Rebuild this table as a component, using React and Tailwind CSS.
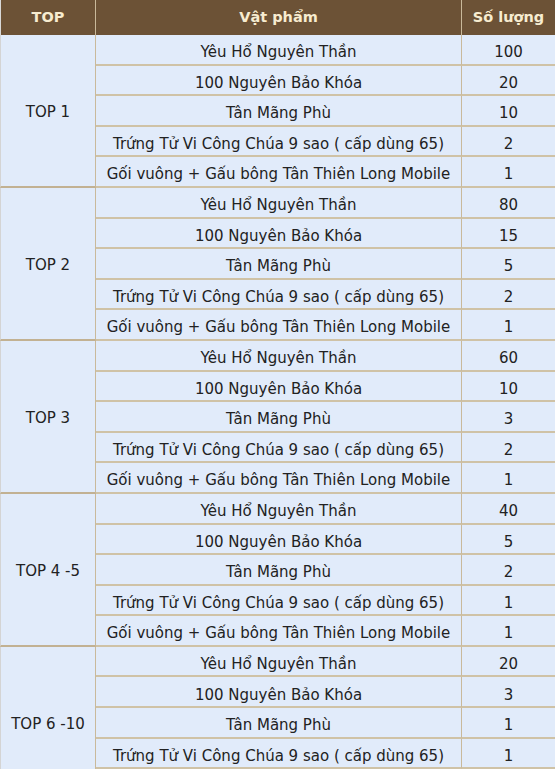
import React from "react";

const groups = [
  { top: "TOP 1", qty: [100, 20, 10, 2, 1] },
  { top: "TOP 2", qty: [80, 15, 5, 2, 1] },
  { top: "TOP 3", qty: [60, 10, 3, 2, 1] },
  { top: "TOP 4 -5", qty: [40, 5, 2, 1, 1] },
  { top: "TOP 6 -10", qty: [20, 3, 1, 1, 1] },
];

const items = [
  "Yêu Hổ Nguyên Thần",
  "100 Nguyên Bảo Khóa",
  "Tân Mãng Phù",
  "Trứng Tử Vi Công Chúa 9 sao ( cấp dùng 65)",
  "Gối vuông + Gấu bông Tân Thiên Long Mobile",
];

export default function App() {
  return (
    <div
      className="w-[555px] h-[769px] overflow-hidden bg-white"
      style={{ fontFamily: '"DejaVu Sans", Verdana, sans-serif' }}
    >
      <table className="w-[555px] table-fixed border-separate border-spacing-0 text-[15px] text-[#222]">
        <colgroup>
          <col className="w-[96px]" />
          <col className="w-[366px]" />
          <col className="w-[93px]" />
        </colgroup>
        <thead>
          <tr className="h-[35px] bg-[#6c5236] text-[#f7ecd0] font-bold text-[14.5px]">
            <th className="border-r border-[#c9b99b] border-l border-l-[#d8d8d8] text-center pt-[1px]">TOP</th>
            <th className="border-r border-[#c9b99b] text-center pt-[1px]">Vật phẩm</th>
            <th className="text-center pt-[1px]">Số lượng</th>
          </tr>
        </thead>
        <tbody className="bg-[#e1ebfa]">
          {groups.map((g) =>
            items.map((it, i) => (
              <tr key={g.top + i} className="h-[30.6px]">
                {i === 0 && (
                  <td
                    rowSpan={5}
                    className="border-l border-l-[#d4d4d4] border-r border-r-[#c9b99b] border-b-2 border-b-[#c2b192] text-center align-middle pt-[4px]"
                  >
                    {g.top}
                  </td>
                )}
                <td className="border-r border-r-[#c9b99b] border-b-2 border-b-[#cfc2a6] text-center whitespace-nowrap pt-[6px]">
                  {it}
                </td>
                <td className="border-b-2 border-b-[#cfc2a6] text-center pt-[6px]">{g.qty[i]}</td>
              </tr>
            ))
          )}
        </tbody>
      </table>
    </div>
  );
}
